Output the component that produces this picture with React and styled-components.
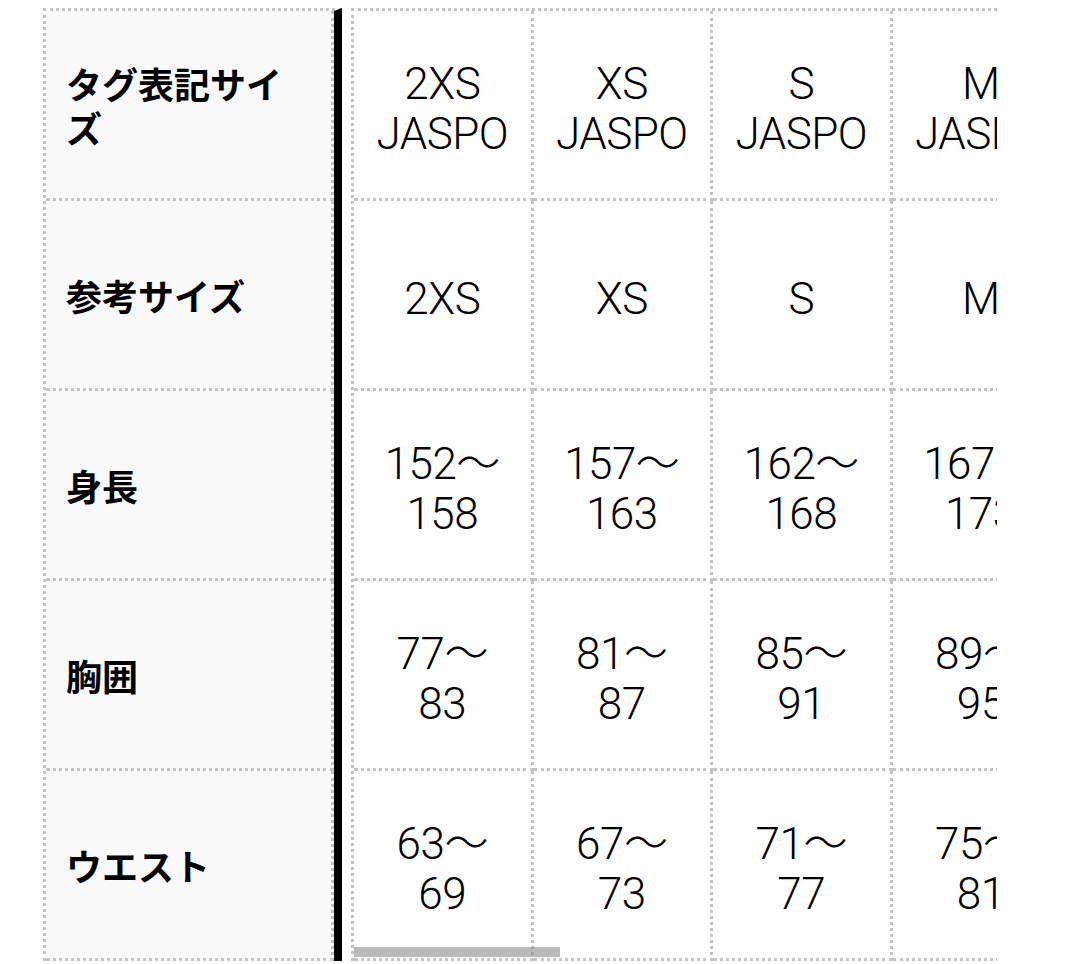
import React from 'react'
import styled, { createGlobalStyle } from 'styled-components'

const GlobalStyle = createGlobalStyle`
    html, body {
        margin: 0;
        padding: 0;
        background: #ffffff;
    }
    body {
        font-family: "Noto Sans CJK JP", "Noto Sans", sans-serif;
        color: #000000;
    }
`;

const DOT = '3px dotted #c4c4c4';
const ROW_HEIGHT = 190;
const COL_WIDTH = 179.5;

const labels = ['タグ表記サイズ', '参考サイズ', '身長', '胸囲', 'ウエスト'];

const sizes = [
    { tag: ['2XS', 'JASPO'], ref: ['2XS'], height: ['152〜', '158'], chest: ['77〜', '83'], waist: ['63〜', '69'] },
    { tag: ['XS', 'JASPO'], ref: ['XS'], height: ['157〜', '163'], chest: ['81〜', '87'], waist: ['67〜', '73'] },
    { tag: ['S', 'JASPO'], ref: ['S'], height: ['162〜', '168'], chest: ['85〜', '91'], waist: ['71〜', '77'] },
    { tag: ['M', 'JASPO'], ref: ['M'], height: ['167〜', '173'], chest: ['89〜', '95'], waist: ['75〜', '81'] },
    { tag: ['L', 'JASPO'], ref: ['L'], height: ['172〜', '178'], chest: ['93〜', '99'], waist: ['79〜', '85'] },
    { tag: ['XL', 'JASPO'], ref: ['XL'], height: ['177〜', '183'], chest: ['97〜', '103'], waist: ['83〜', '89'] },
    { tag: ['2XL', 'JASPO'], ref: ['2XL'], height: ['182〜', '188'], chest: ['101〜', '107'], waist: ['87〜', '93'] },
];

const rowKeys = ['tag', 'ref', 'height', 'chest', 'waist'];

const Table = styled.section`
    display: flex;
    align-items: flex-start;
    margin: 8px 0 0 43px;
`;

const StickyColumn = styled.div`
    display: flex;
    flex-direction: column;
    flex-shrink: 0;
    border-top: ${DOT};
    border-left: ${DOT};
    border-right: 8px solid #000000;
`;

const HeadCell = styled.div`
    box-sizing: border-box;
    width: 288px;
    height: ${ROW_HEIGHT}px;
    padding: 0 20px;
    display: flex;
    align-items: center;
    background: #f9f9f9;
    border-right: ${DOT};
    border-bottom: ${DOT};
    font-family: "Noto Sans CJK JP", "Noto Sans", sans-serif;
    font-weight: 700;
    font-size: 36px;
    line-height: 44px;
`;

const Scroller = styled.div`
    position: relative;
    flex-shrink: 0;
    width: 643px;
    margin-left: 9px;
    overflow: hidden;
    border-top: ${DOT};
    border-left: ${DOT};
`;

const Row = styled.div`
    display: flex;
    width: max-content;
`;

const DataCell = styled.div`
    box-sizing: border-box;
    flex-shrink: 0;
    width: ${COL_WIDTH}px;
    height: ${ROW_HEIGHT}px;
    padding-top: 8px;
    display: flex;
    flex-direction: column;
    align-items: center;
    justify-content: center;
    text-align: center;
    border-right: ${DOT};
    border-bottom: ${DOT};
    font-family: Roboto, "Noto Sans CJK JP", sans-serif;
    font-weight: 300;
    font-size: 44px;
    line-height: 50px;
    letter-spacing: -0.5px;
    white-space: nowrap;
`;

const Line = styled.span`
    display: block;
`;

const Thumb = styled.div`
    position: absolute;
    left: 0;
    bottom: 4px;
    width: 206px;
    height: 10px;
    background: rgba(140, 140, 140, 0.6);
`;

export default function App() {
    return (
        <>
            <GlobalStyle />
            <Table>
                <StickyColumn>
                    {labels.map(label => (
                        <HeadCell key={label}>{label}</HeadCell>
                    ))}
                </StickyColumn>

                <Scroller>
                    {rowKeys.map(key => (
                        <Row key={key}>
                            {sizes.map((size, i) => (
                                <DataCell key={i}>
                                    {size[key].map((line, j) => (
                                        <Line key={j}>{line}</Line>
                                    ))}
                                </DataCell>
                            ))}
                        </Row>
                    ))}
                    {/* overlay scroll indicator */}
                    <Thumb />
                </Scroller>
            </Table>
        </>
    )
}
